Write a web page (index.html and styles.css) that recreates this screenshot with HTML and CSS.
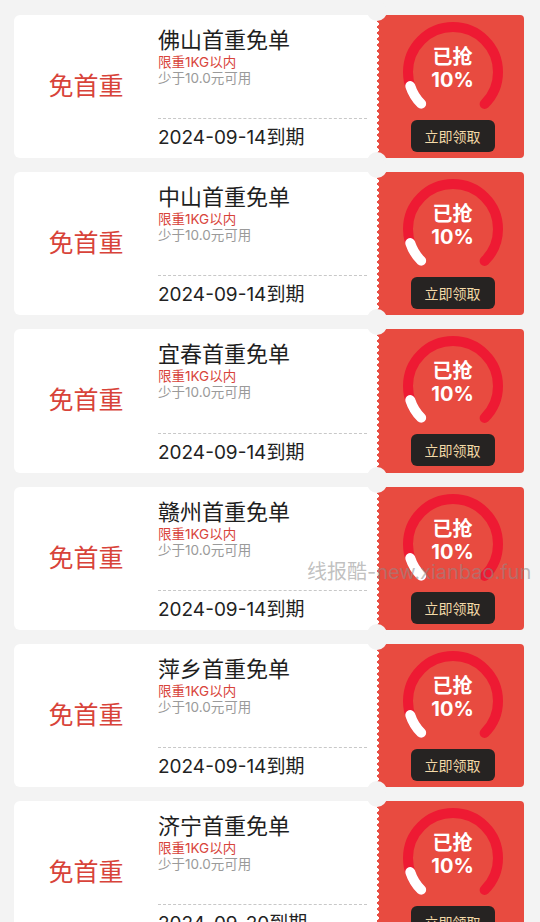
FILE: index.html
```html
<!DOCTYPE html>
<html lang="zh-CN">
<head>
<meta charset="UTF-8" />
<meta name="viewport" content="width=device-width, initial-scale=1.0"/>
<title>首重免单</title>
<link rel="stylesheet" href="styles.css">
</head>
<body>

<div class="list">

<div class="coupon">
<div class="main">
<div class="tag">免首重</div>
<div class="info">
<div class="title">佛山首重免单</div>
<div class="limit">限重1KG以内</div>
<div class="cond">少于10.0元可用</div>
<div class="expire">2024-09-14到期</div>
</div>
</div>
<div class="side">
<div class="gauge">
<svg width="100" height="98" viewBox="0 0 100 98">
<circle class="track" cx="50" cy="50" r="45" />
<circle class="done" cx="50" cy="50" r="45" />
</svg>
<div class="gauge-text">已抢<br>10%</div>
</div>
<button class="take">立即领取</button>
</div>
</div>

<div class="coupon">
<div class="main">
<div class="tag">免首重</div>
<div class="info">
<div class="title">中山首重免单</div>
<div class="limit">限重1KG以内</div>
<div class="cond">少于10.0元可用</div>
<div class="expire">2024-09-14到期</div>
</div>
</div>
<div class="side">
<div class="gauge">
<svg width="100" height="98" viewBox="0 0 100 98">
<circle class="track" cx="50" cy="50" r="45" />
<circle class="done" cx="50" cy="50" r="45" />
</svg>
<div class="gauge-text">已抢<br>10%</div>
</div>
<button class="take">立即领取</button>
</div>
</div>

<div class="coupon">
<div class="main">
<div class="tag">免首重</div>
<div class="info">
<div class="title">宜春首重免单</div>
<div class="limit">限重1KG以内</div>
<div class="cond">少于10.0元可用</div>
<div class="expire">2024-09-14到期</div>
</div>
</div>
<div class="side">
<div class="gauge">
<svg width="100" height="98" viewBox="0 0 100 98">
<circle class="track" cx="50" cy="50" r="45" />
<circle class="done" cx="50" cy="50" r="45" />
</svg>
<div class="gauge-text">已抢<br>10%</div>
</div>
<button class="take">立即领取</button>
</div>
</div>

<div class="coupon">
<div class="main">
<div class="tag">免首重</div>
<div class="info">
<div class="title">赣州首重免单</div>
<div class="limit">限重1KG以内</div>
<div class="cond">少于10.0元可用</div>
<div class="expire">2024-09-14到期</div>
</div>
</div>
<div class="side">
<div class="gauge">
<svg width="100" height="98" viewBox="0 0 100 98">
<circle class="track" cx="50" cy="50" r="45" />
<circle class="done" cx="50" cy="50" r="45" />
</svg>
<div class="gauge-text">已抢<br>10%</div>
</div>
<button class="take">立即领取</button>
</div>
</div>

<div class="coupon">
<div class="main">
<div class="tag">免首重</div>
<div class="info">
<div class="title">萍乡首重免单</div>
<div class="limit">限重1KG以内</div>
<div class="cond">少于10.0元可用</div>
<div class="expire">2024-09-14到期</div>
</div>
</div>
<div class="side">
<div class="gauge">
<svg width="100" height="98" viewBox="0 0 100 98">
<circle class="track" cx="50" cy="50" r="45" />
<circle class="done" cx="50" cy="50" r="45" />
</svg>
<div class="gauge-text">已抢<br>10%</div>
</div>
<button class="take">立即领取</button>
</div>
</div>

<div class="coupon">
<div class="main">
<div class="tag">免首重</div>
<div class="info">
<div class="title">济宁首重免单</div>
<div class="limit">限重1KG以内</div>
<div class="cond">少于10.0元可用</div>
<div class="expire">2024-09-20到期</div>
</div>
</div>
<div class="side">
<div class="gauge">
<svg width="100" height="98" viewBox="0 0 100 98">
<circle class="track" cx="50" cy="50" r="45" />
<circle class="done" cx="50" cy="50" r="45" />
</svg>
<div class="gauge-text">已抢<br>10%</div>
</div>
<button class="take">立即领取</button>
</div>
</div>

</div>

<div class="watermark">线报酷-new.xianbao.fun</div>

</body>
</html>
```

FILE: styles.css
```css
* { box-sizing: border-box; }
body {
margin: 0;
background-color: #f3f3f3;
font-family: Inter, "Noto Sans CJK SC", sans-serif;
color: #222;
}
.list {
padding: 15px 16px 0 14px;
}
.coupon {
position: relative;
display: flex;
height: 143.2px;
margin-bottom: 14px;
}
.coupon::before,
.coupon::after {
content: "";
position: absolute;
left: 353px;
width: 20px;
height: 20px;
border-radius: 50%;
background-color: #f3f3f3;
z-index: 2;
}
.coupon::before { top: -14px; }
.coupon::after { bottom: -14px; }
.main {
flex: 1;
display: flex;
background-color: #fff;
border-radius: 6px 0 0 6px;
}
.tag {
width: 144px;
display: flex;
align-items: center;
justify-content: center;
padding-bottom: 5px;
font-size: 25px;
color: #d8433a;
}
.info {
flex: 1;
display: flex;
flex-direction: column;
padding: 11px 10px 0 0;
}
.title {
font-size: 22px;
line-height: 28px;
color: #1e1e1e;
}
.limit {
font-size: 13.5px;
line-height: 16px;
color: #d8433a;
}
.cond {
font-size: 13.5px;
line-height: 16px;
color: #9a9a9a;
}
.expire {
margin-top: auto;
border-top: 1px dashed #c8c8c8;
padding: 6px 0 7px;
font-size: 19px;
line-height: 26px;
color: #222;
}
.side {
width: 147px;
display: flex;
flex-direction: column;
align-items: center;
padding-top: 7px;
border-radius: 0 4px 4px 0;
background:
radial-gradient(circle at 0 50%, #fff 1.6px, transparent 2.2px) left top / 4px 6px repeat-y,
#e84b40;
}
.gauge {
position: relative;
width: 100px;
height: 98px;
margin-left: 4px;
}
.gauge svg { display: block; }
.gauge circle {
fill: none;
stroke-width: 10;
stroke-linecap: round;
transform: rotate(135deg);
transform-origin: 50px 50px;
}
.gauge .track {
stroke: #ee1a33;
stroke-dasharray: 212 283;
}
.gauge .done {
stroke: #fff;
stroke-dasharray: 21 283;
}
.gauge-text {
position: absolute;
left: 0;
right: 0;
top: 24px;
text-align: center;
color: #fff;
font-size: 20px;
font-weight: 700;
line-height: 23px;
}
.take {
width: 84px;
height: 32px;
margin-left: 4px;
border: none;
border-radius: 6px;
background-color: #262322;
color: #f3d9a8;
font-family: inherit;
font-size: 14px;
padding: 0;
cursor: pointer;
}
.watermark {
position: absolute;
top: 556px;
left: 307px;
white-space: nowrap;
font-size: 20px;
color: rgba(140, 140, 140, 0.55);
pointer-events: none;
}
```
